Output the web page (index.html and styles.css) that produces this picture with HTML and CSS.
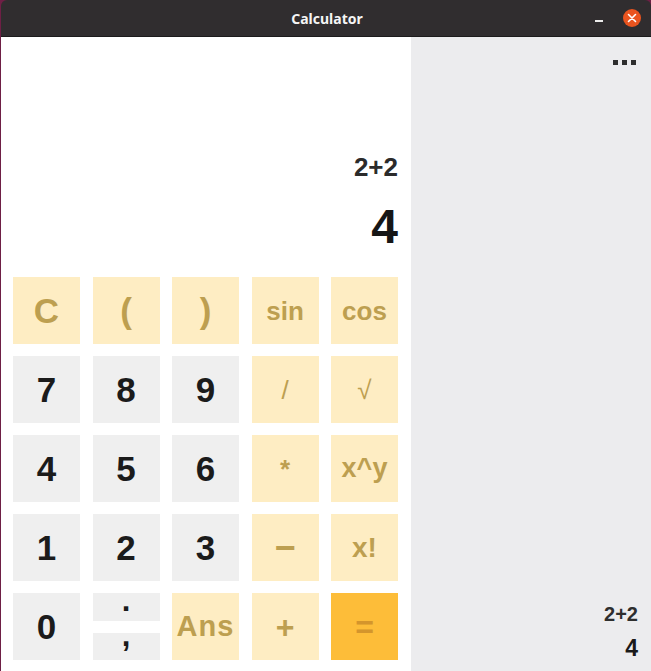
FILE: index.html
```html
<!DOCTYPE html>
<html>
<head>
<meta charset="utf-8">
<link rel="stylesheet" href="styles.css">
</head>
<body>
<div class="window">
  <header class="titlebar">
    <span class="title">Calculator</span>
    <span class="minimize"></span>
    <span class="close">
      <svg width="18" height="18" viewBox="0 0 18 18"><path d="M5.5 5.5 L12.5 12.5 M12.5 5.5 L5.5 12.5" stroke="#fff" stroke-width="1.6" stroke-linecap="round"/></svg>
    </span>
  </header>
  <div class="content">
    <main class="calc">
      <section class="display">
        <div class="expr">2+2</div>
        <div class="result">4</div>
      </section>
      <section class="keypad">
        <div class="key fn big">C</div>
        <div class="key fn big">(</div>
        <div class="key fn big">)</div>
        <div class="key fn word">sin</div>
        <div class="key fn word">cos</div>

        <div class="key num">7</div>
        <div class="key num">8</div>
        <div class="key num">9</div>
        <div class="key fn thin">/</div>
        <div class="key fn thin">√</div>

        <div class="key num">4</div>
        <div class="key num">5</div>
        <div class="key num">6</div>
        <div class="key fn word">*</div>
        <div class="key fn pow">x^y</div>

        <div class="key num">1</div>
        <div class="key num">2</div>
        <div class="key num">3</div>
        <div class="key fn minus">−</div>
        <div class="key fn fact">x!</div>

        <div class="key num">0</div>
        <div class="split">
          <div class="half dot"><span>.</span></div>
          <div class="half comma"><span>,</span></div>
        </div>
        <div class="key fn ans">Ans</div>
        <div class="key fn op">+</div>
        <div class="key eq op">=</div>
      </section>
    </main>
    <aside class="history">
      <div class="menu"><span></span><span></span><span></span></div>
      <div class="entry">
        <div class="h-expr">2+2</div>
        <div class="h-result">4</div>
      </div>
    </aside>
  </div>
</div>
</body>
</html>
```

FILE: styles.css
```css
html, body {
  margin: 0;
  padding: 0;
}
body {
  width: 651px;
  height: 671px;
  background: #6e1f45;
  overflow: hidden;
  font-family: "Liberation Sans", Arial, sans-serif;
}
.window {
  margin-left: 1px;
  width: 650px;
  height: 671px;
  display: flex;
  flex-direction: column;
  border-radius: 6px 6px 0 0;
  overflow: hidden;
}
.titlebar {
  height: 36px;
  flex: none;
  background: #302d2f;
  border-bottom: 1px solid #1c1b1c;
  position: relative;
  display: flex;
  align-items: center;
  justify-content: center;
}
.title {
  color: #f5f5f5;
  font-family: "Noto Sans", sans-serif;
  font-weight: 700;
  font-size: 14px;
  margin-left: 2px;
  margin-top: 1px;
}
.minimize {
  position: absolute;
  left: 594px;
  top: 20px;
  width: 8px;
  height: 1.5px;
  background: #ececec;
}
.close {
  position: absolute;
  left: 622px;
  top: 9px;
  width: 18px;
  height: 18px;
  border-radius: 50%;
  background: #e9541f;
  display: flex;
}
.content {
  flex: 1;
  display: flex;
  min-height: 0;
}
.calc {
  width: 410px;
  flex: none;
  background: #ffffff;
  display: flex;
  flex-direction: column;
}
.display {
  height: 240px;
  box-sizing: border-box;
  padding: 115px 13px 0 12px;
  text-align: right;
}
.expr {
  font-weight: 700;
  font-size: 26px;
  line-height: 30px;
  color: #2b2b2b;
}
.result {
  margin-top: 17px;
  font-weight: 700;
  font-size: 48px;
  line-height: 56px;
  color: #161616;
}
.keypad {
  padding: 0 13px 0 12px;
  display: grid;
  grid-template-columns: repeat(5, 67px);
  grid-template-rows: repeat(5, 67px);
  column-gap: 12.5px;
  row-gap: 12px;
}
.key {
  display: flex;
  align-items: center;
  justify-content: center;
  font-weight: 700;
  line-height: 1;
}
.num {
  background: #efefef;
  color: #1b1b1b;
  font-size: 35px;
}
.fn {
  background: #feedc3;
  color: #bd9f50;
}
.big { font-size: 35px; }
.word { font-size: 26px; }
.pow { font-size: 27px; }
.fact { font-size: 28px; }
.ans { font-size: 29px; letter-spacing: 1px; }
.thin { font-size: 26px; font-weight: 400; }
.op { font-size: 32px; }
.minus { font-size: 36px; }
.eq {
  background: #fdbd39;
  color: #d4952c;
}
.split {
  display: flex;
  flex-direction: column;
  gap: 12px;
  height: 67px;
}
.half {
  flex: none;
  background: #efefef;
  color: #1b1b1b;
  font-weight: 700;
  font-size: 31px;
  text-align: center;
}
.dot {
  height: 28px;
  line-height: 28px;
}
.comma {
  height: 27px;
  line-height: 27px;
}
.half span {
  display: inline-block;
}
.dot span {
  transform: translateY(-6.5px);
}
.comma span {
  transform: translateY(-11px);
}
.history {
  flex: 1;
  background: #ececee;
  display: flex;
  flex-direction: column;
  justify-content: space-between;
  padding: 23px 13px 10px 0;
}
.menu {
  align-self: flex-end;
  display: flex;
  gap: 4px;
  margin-right: 2px;
}
.menu span {
  width: 5px;
  height: 5px;
  background: #2e2e2e;
}
.entry {
  text-align: right;
}
.h-expr {
  font-weight: 700;
  font-size: 20px;
  line-height: 24px;
  color: #2e2e2e;
}
.h-result {
  margin-top: 9px;
  font-weight: 700;
  font-size: 23px;
  line-height: 26px;
  color: #1a1a1a;
}
```
